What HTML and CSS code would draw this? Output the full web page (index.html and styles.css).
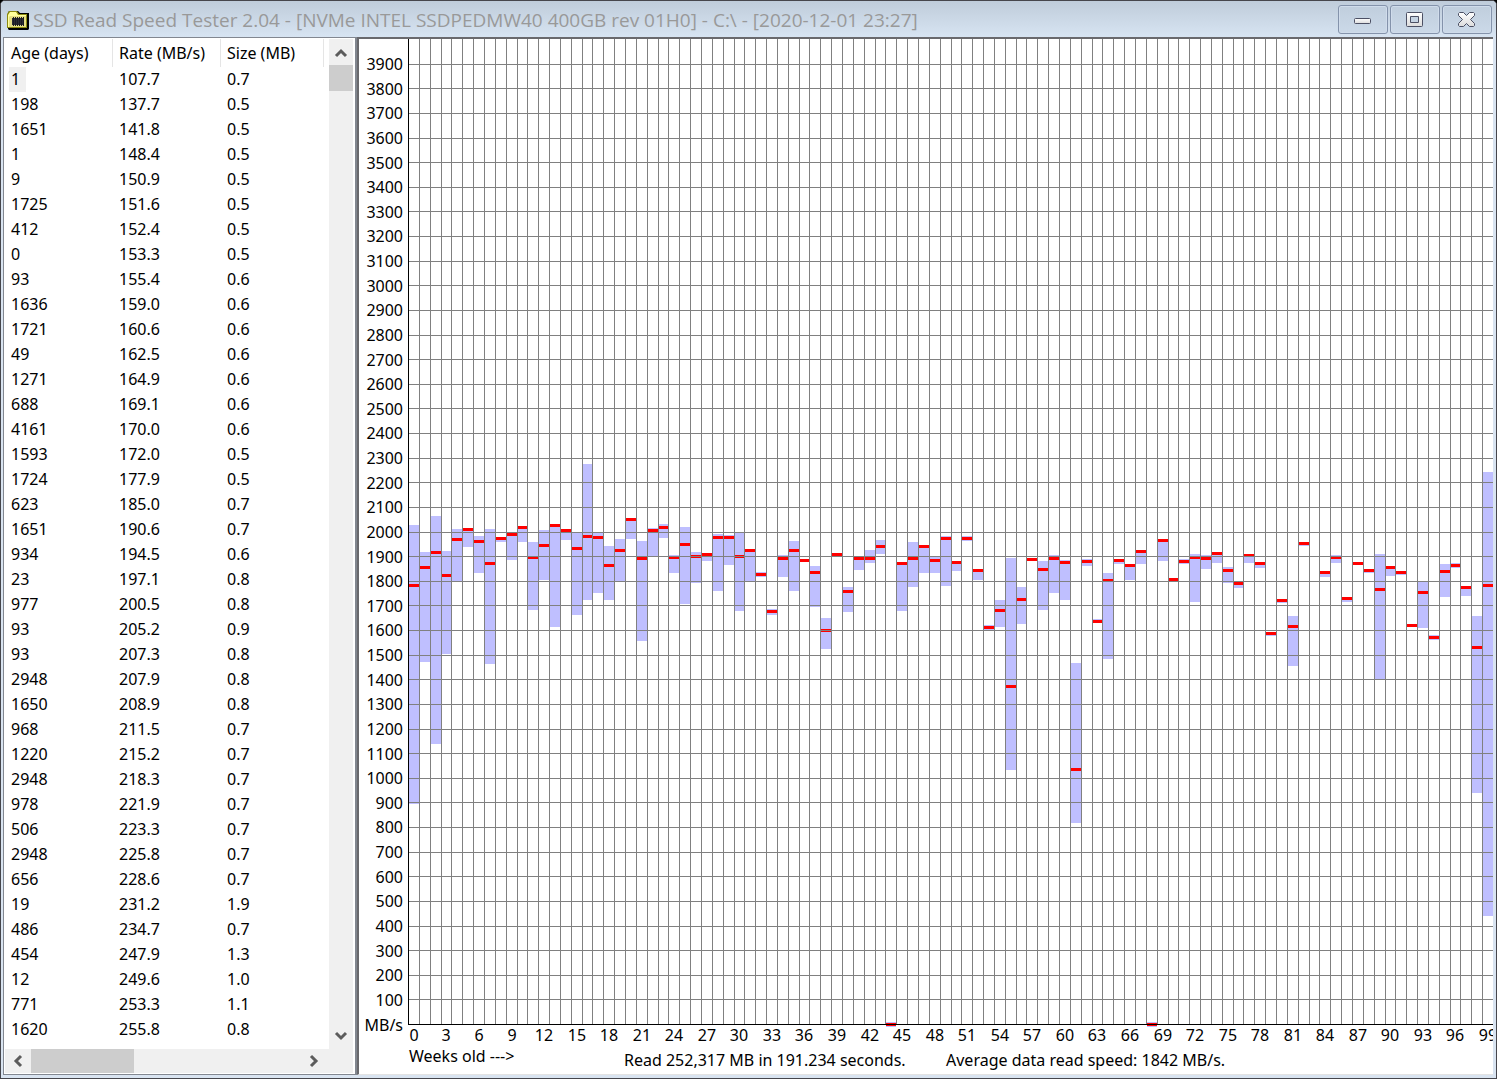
FILE: index.html
```html
<!DOCTYPE html>
<html lang="en">
<head>
<meta charset="utf-8">
<title>SSD Read Speed Tester 2.04</title>
<link rel="stylesheet" href="styles.css">
</head>
<body>
<div class="window">
  <header class="titlebar">
    <svg class="app-icon" width="24" height="20" viewBox="0 0 24 20" aria-hidden="true">
      <path d="M2 2l2-1h8l2 2h9v16l-1 1H3l-1-1z" fill="#000"/>
      <path d="M1 18V4l2-3h8l2 3h8v14z" fill="#8c8a10"/>
      <path d="M2 17V5l2-3h6l2 3h8v12z" fill="#ffff9c"/>
      <path d="M4 6h16v11H3V7z" fill="#e6df83"/>
      <path d="M6 8h12v7H6z" fill="#2c2c34"/>
      <path d="M7.500 7v9M9.500 7v9M11.500 7v9M13.500 7v9M15.500 7v9M17.500 7v9" stroke="#1c1c22"/>
    </svg>
    <h1 class="title">SSD Read Speed Tester 2.04 - [NVMe INTEL SSDPEDMW40 400GB rev 01H0] - C:\ - [2020-12-01 23:27]</h1>
    <div class="controls">
      <button type="button" class="control" aria-label="Minimize">
        <svg width="18" height="17" viewBox="0 0 18 17"><defs><linearGradient id="glyph" x1="0" y1="0" x2="0" y2="1"><stop offset="0" stop-color="#fff"/><stop offset="1" stop-color="#dcdcdc"/></linearGradient></defs><rect x="0.500" y="7.500" width="16" height="5" rx="1" class="glyph"/></svg>
      </button>
      <button type="button" class="control" aria-label="Maximize">
        <svg width="18" height="17" viewBox="0 0 18 17"><path fill-rule="evenodd" d="M1.500 1.500h14a1 1 0 0 1 1 1v12a1 1 0 0 1-1 1h-14a1 1 0 0 1-1-1v-12a1 1 0 0 1 1-1zM4.500 5.500v6h8v-6z" class="glyph"/></svg>
      </button>
      <button type="button" class="control" aria-label="Close">
        <svg width="18" height="17" viewBox="0 0 18 17"><path d="M1.500 1.500h4l3 3 3-3h4l1 1v2l-4 4 4 4v2l-1 1h-4l-3-3-3 3h-4l-1-1v-2l4-4-4-4v-2z" class="glyph"/></svg>
      </button>
    </div>
  </header>

  <main class="panes">
    <section class="list-pane" aria-label="Files">
      <div class="list-row">
        <div class="list">
          <table class="files">
            <thead><tr><th>Age (days)</th><th>Rate (MB/s)</th><th>Size (MB)</th></tr></thead>
            <tbody>
              <tr><td><span class="focused">1</span></td><td>107.7</td><td>0.7</td></tr>
              <tr><td>198</td><td>137.7</td><td>0.5</td></tr>
              <tr><td>1651</td><td>141.8</td><td>0.5</td></tr>
              <tr><td>1</td><td>148.4</td><td>0.5</td></tr>
              <tr><td>9</td><td>150.9</td><td>0.5</td></tr>
              <tr><td>1725</td><td>151.6</td><td>0.5</td></tr>
              <tr><td>412</td><td>152.4</td><td>0.5</td></tr>
              <tr><td>0</td><td>153.3</td><td>0.5</td></tr>
              <tr><td>93</td><td>155.4</td><td>0.6</td></tr>
              <tr><td>1636</td><td>159.0</td><td>0.6</td></tr>
              <tr><td>1721</td><td>160.6</td><td>0.6</td></tr>
              <tr><td>49</td><td>162.5</td><td>0.6</td></tr>
              <tr><td>1271</td><td>164.9</td><td>0.6</td></tr>
              <tr><td>688</td><td>169.1</td><td>0.6</td></tr>
              <tr><td>4161</td><td>170.0</td><td>0.6</td></tr>
              <tr><td>1593</td><td>172.0</td><td>0.5</td></tr>
              <tr><td>1724</td><td>177.9</td><td>0.5</td></tr>
              <tr><td>623</td><td>185.0</td><td>0.7</td></tr>
              <tr><td>1651</td><td>190.6</td><td>0.7</td></tr>
              <tr><td>934</td><td>194.5</td><td>0.6</td></tr>
              <tr><td>23</td><td>197.1</td><td>0.8</td></tr>
              <tr><td>977</td><td>200.5</td><td>0.8</td></tr>
              <tr><td>93</td><td>205.2</td><td>0.9</td></tr>
              <tr><td>93</td><td>207.3</td><td>0.8</td></tr>
              <tr><td>2948</td><td>207.9</td><td>0.8</td></tr>
              <tr><td>1650</td><td>208.9</td><td>0.8</td></tr>
              <tr><td>968</td><td>211.5</td><td>0.7</td></tr>
              <tr><td>1220</td><td>215.2</td><td>0.7</td></tr>
              <tr><td>2948</td><td>218.3</td><td>0.7</td></tr>
              <tr><td>978</td><td>221.9</td><td>0.7</td></tr>
              <tr><td>506</td><td>223.3</td><td>0.7</td></tr>
              <tr><td>2948</td><td>225.8</td><td>0.7</td></tr>
              <tr><td>656</td><td>228.6</td><td>0.7</td></tr>
              <tr><td>19</td><td>231.2</td><td>1.9</td></tr>
              <tr><td>486</td><td>234.7</td><td>0.7</td></tr>
              <tr><td>454</td><td>247.9</td><td>1.3</td></tr>
              <tr><td>12</td><td>249.6</td><td>1.0</td></tr>
              <tr><td>771</td><td>253.3</td><td>1.1</td></tr>
              <tr><td>1620</td><td>255.8</td><td>0.8</td></tr>
            </tbody>
          </table>
        </div>
        <div class="scroll vertical">
          <button type="button" class="arrow" aria-label="Scroll up"><svg width="14" height="10" viewBox="0 0 14 10"><path d="M2 8l5-5 5 5" class="chevron"/></svg></button>
          <div class="thumb"></div>
          <button type="button" class="arrow last" aria-label="Scroll down"><svg width="14" height="10" viewBox="0 0 14 10"><path d="M2 2l5 5 5-5" class="chevron"/></svg></button>
        </div>
      </div>
      <div class="scroll horizontal">
        <button type="button" class="arrow" aria-label="Scroll left"><svg width="10" height="14" viewBox="0 0 10 14"><path d="M8 2L3 7l5 5" class="chevron"/></svg></button>
        <div class="thumb"></div>
        <button type="button" class="arrow last" aria-label="Scroll right"><svg width="10" height="14" viewBox="0 0 10 14"><path d="M2 2l5 5-5 5" class="chevron"/></svg></button>
      </div>
    </section>

    <section class="chart-pane" aria-label="Read speed by file age">
      <div class="chart-area"><svg class="chart" id="chart" role="img" aria-label="Read speed in MB/s against age in weeks"></svg></div>
      <footer class="summary">
        <span class="axis-name">Weeks old ---&gt;</span>
        <span class="total">Read 252,317 MB in 191.234 seconds.</span>
        <span class="average">Average data read speed: 1842 MB/s.</span>
      </footer>
    </section>
  </main>
</div>
<script src="chart.js"></script>
</body>
</html>
```
FILE: styles.css
```css
* { box-sizing: border-box; }

body {
  margin: 0;
  background: #000;
  color: #000;
  font: 16px/20px "Noto Sans", "DejaVu Sans Condensed", sans-serif;
}

.window {
  display: flex;
  flex-direction: column;
  height: 100vh;
  padding: 0 3px 3px 2px;
  border: 1px solid #46464c;
  border-radius: 5px 5px 0 0;
  background: #d9e4f1;
}

.titlebar {
  display: flex;
  align-items: center;
  flex: none;
  height: 36px;
  margin: 0 -3px 0 -2px;
  padding: 1px 4px 0 5px;
  border-radius: 4px 4px 0 0;
  background: linear-gradient(#bfccda, #d7e4f2);
}

.app-icon { flex: none; }

.title {
  flex: 1;
  margin: 0 0 0 3px;
  overflow: hidden;
  white-space: nowrap;
  color: #999;
  font: 400 19px/26px "Open Sans", "Noto Sans", sans-serif;
}

.controls {
  display: flex;
  gap: 2px;
}

.control {
  display: grid;
  place-items: center;
  width: 50px;
  height: 29px;
  padding: 0;
  border: 1px solid #8493ab;
  border-radius: 3px;
  background: linear-gradient(#c0cedd, #cbd9e8);
  box-shadow: inset 0 0 0 1px #d0dceb;
}

.glyph {
  fill: url(#glyph);
  stroke: #4c5064;
}

.panes {
  display: flex;
  flex: 1;
  min-height: 0;
}

.list-pane {
  display: flex;
  flex-direction: column;
  flex: none;
  width: 354px;
  padding: 1px 2px 1px 1px;
  border: 1px solid #828790;
  border-right-width: 2px;
  background: #fff;
}

.list-row {
  display: flex;
  flex: 1;
  min-height: 0;
}

.list {
  flex: 1;
  overflow: hidden;
}

.files {
  width: 319px;
  table-layout: fixed;
  border-collapse: separate;
  border-spacing: 0;
}

.files th,
.files td {
  height: 25px;
  padding: 0 0 1px 6px;
  text-align: left;
  font-weight: 400;
  line-height: 24px;
  white-space: nowrap;
}

.files th {
  height: 28px;
  padding-bottom: 0;
  border-right: 1px solid #e5e5e5;
}

.files th:first-child,
.files th:nth-child(2) { width: 108px; }

.focused {
  display: block;
  width: 17px;
  margin: 0 0 -1px -2px;
  padding: 0 0 1px 2px;
  background: #f0f0f0;
}

.scroll {
  display: flex;
  flex: none;
  background: #f0f0f0;
}

.scroll .thumb { background: #cdcdcd; }

.arrow {
  display: grid;
  place-items: center;
  flex: none;
  padding: 0;
  border: 0;
  background: none;
}

.arrow.last { margin: auto 0 0 auto; }

.vertical {
  flex-direction: column;
  width: 24px;
}

.vertical .arrow { width: 24px; height: 26px; padding-top: 2px; }
.vertical .arrow.last { padding-top: 0; }
.vertical .thumb { height: 26px; }

.horizontal {
  height: 24px;
  padding-right: 26px;
}

.horizontal .arrow { width: 26px; height: 24px; }
.horizontal .thumb { width: 103px; }

.chevron {
  fill: none;
  stroke: #5c5c5c;
  stroke-width: 3;
}

.chart-pane {
  display: flex;
  flex-direction: column;
  flex: 1;
  min-width: 0;
  border-top: 2px solid #69696d;
  border-left: 2px solid #69696d;
  border-bottom: 1px solid #e3e3e3;
  background: #fff;
}

.chart-area {
  flex: 1;
  min-height: 0;
  overflow: hidden;
}

.chart {
  display: block;
  width: 100%;
  height: 100%;
  shape-rendering: crispEdges;
}

.chart .range { fill: #bfbfff; }
.chart .mean { fill: #f00; }
.chart .grid { fill: #808080; }
.chart .axis { fill: #000; }
.chart .y-label { text-anchor: end; }
.chart .x-label { text-anchor: middle; }

.summary {
  display: flex;
  flex: none;
  height: 28px;
  padding-left: 50px;
  white-space: nowrap;
}

.axis-name { width: 215px; }
.total { width: 322px; padding-top: 4px; }
.average { padding-top: 4px; }
```
FILE: chart.js
```js
// One entry per week: [top of range, mean, bottom of range], counted in
// steps down from the 584-step mark; 985 steps span 0 to 4000 MB/s.
const STEPS = 985;
const ORIGIN = 584;
const MAX_RATE = 4000;
const WEEKS = 100;
const weeks = [
  [85,145,364],[112,127,222],[76,112,304],[111,135,214],[89,99,141],
  [88,89,107],[96,101,133],[89,123,224],[97,98,102],[93,94,120],
  [86,87,102],[102,117,170],[90,105,140],[84,85,187],[89,90,100],
  [93,108,175],[24,96,160],[93,97,153],[106,125,160],[99,110,141],
  [78,79,99],[101,118,201],[88,90,117],[84,87,98],[115,117,133],
  [87,104,164],[112,116,143],[113,114,121],[94,97,151],[95,97,125],
  [93,116,171],[109,110,141],[132,134,137],[169,171,175],[115,118,137],
  [101,110,151],[119,120,122],[126,132,167],[178,190,209],[113,114,116],
  [147,151,172],[117,118,130],[110,118,123],[100,106,114],[582,584,587],
  [122,123,171],[102,118,147],[105,106,133],[117,120,133],[96,98,146],
  [121,122,131],[96,98,101],[129,130,140],[185,187,190],[160,170,187],
  [118,246,330],[147,159,184],[118,119,121],[121,129,170],[115,118,153],
  [120,122,160],[223,329,383],[119,121,126],[179,181,183],[133,140,219],
  [119,120,124],[124,125,140],[110,111,124],[582,584,587],[99,100,121],
  [138,139,141],[119,121,124],[114,117,162],[115,118,129],[112,113,123],
  [127,130,143],[142,143,148],[114,115,123],[122,123,128],[192,193,196],
  [159,160,163],[176,186,226],[102,103,106],null,[131,132,137],
  [115,117,123],[157,158,162],[122,123,125],[129,130,133],[114,149,240],
  [126,127,136],[131,132,135],[184,185,187],[141,152,188],[195,197,200],
  [124,131,157],[123,125,128],[146,147,156],[176,207,353],[32,145,476]
];

const chart = document.getElementById("chart");
const LEFT = 49;
const BOTTOM = 22;

function rect(cls, x, y, width, height) {
  return `<rect class="${cls}" x="${x}" y="${y}" width="${width}" height="${height}"/>`;
}

function label(cls, x, y, text) {
  return `<text class="${cls}" x="${x}" y="${y}">${text}</text>`;
}

function draw() {
  const { width, height } = chart.getBoundingClientRect();
  const plotWidth = width - LEFT;
  const base = Math.round(height - BOTTOM);
  const columnX = (i) => LEFT + Math.round((plotWidth * i) / WEEKS);
  const stepY = (s) => base - Math.round(((ORIGIN - s) * base) / STEPS);
  let out = "";

  weeks.forEach((week, i) => {
    if (!week) return;
    const [top, mean, bottom] = week;
    const x = columnX(i) + 1;
    const w = columnX(i + 1) - x;
    out += rect("range", x, stepY(top), w, stepY(bottom) - stepY(top));
    out += rect("mean", x, stepY(mean) - 1, w, 3);
  });

  for (let rate = 100; rate < MAX_RATE; rate += 100) {
    const y = base - (base * rate) / MAX_RATE;
    out += rect("grid", LEFT, Math.round(y), plotWidth, 1);
    out += label("y-label", LEFT - 5, Math.ceil(y) + 6, rate);
  }
  out += label("y-label", LEFT - 5, base + 7, "MB/s");

  for (let i = 1; i < WEEKS; i++) {
    out += rect("grid", columnX(i), 0, 1, base);
  }
  for (let i = 0; i < WEEKS; i += 3) {
    out += label("x-label", Math.round((columnX(i) + columnX(i + 1)) / 2), base + 17, i);
  }
  out += rect("axis", LEFT, 0, 1, base + 1);
  out += rect("axis", LEFT, base, plotWidth, 1);
  chart.innerHTML = out;
}

draw();
window.addEventListener("resize", draw);
```
